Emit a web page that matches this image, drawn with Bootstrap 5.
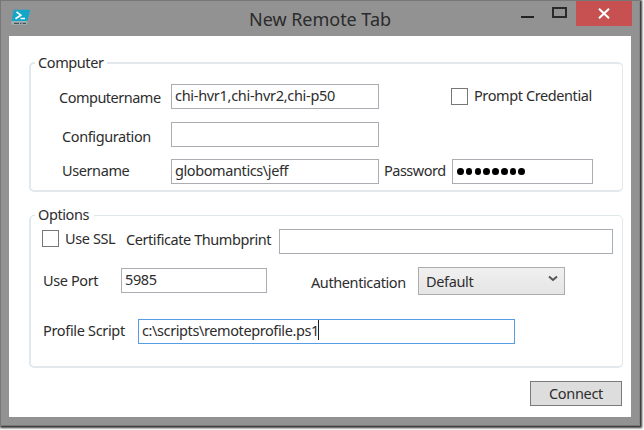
<!DOCTYPE html>
<html lang="en">
<head>
<meta charset="utf-8">
<meta name="viewport" content="width=device-width, initial-scale=1">
<title>New Remote Tab</title>
<link href="https://cdn.jsdelivr.net/npm/bootstrap@5.3.0/dist/css/bootstrap.min.css" rel="stylesheet">
<style>
body{width:644px;height:430px;overflow:hidden;background:#fff;font-family:"Noto Sans","Open Sans",sans-serif;font-size:14.5px;line-height:20px;letter-spacing:-.4px;color:#2d2d2d}
.win{width:640px;height:426px;background:#929292;border:1px solid #777;border-right-color:#858585;box-shadow:1px 1px 2px 1px #333}
.titlebar{height:35px;padding-left:10px}
.app-icon{width:20px;height:17px;margin-top:8px}
.caption{width:144px;margin:5px 0 0 218px;font-size:18px;line-height:26px;letter-spacing:-.03px;color:#2b2b2b}
.min-btn{width:13px;height:2px;background:#222;margin:15px 0 0 128px}
.max-btn{width:15px;height:11px;border:2px solid #2a2a2a;margin:6px 0 0 18px}
.close-btn{width:56px;height:25px;background:#c75050;margin-left:9px}
.client{width:622px;height:381px;margin-left:8px;background:#fff;padding:26px 9px 0 20px}
.group{border:2px solid #e1e8ee;border-right-width:1px;border-radius:5px;width:594px;height:130px}
.group-options{height:153px;margin-top:23px;border-top:1px solid #dce8ea}
.legend-text{height:20px;width:72px;margin:-12px 0 0 4px;padding:0 4px 0 3px;background:#fff}
.group-options .legend-text{width:59px}
.line{height:25px}
.line-1{margin-top:12px;padding-left:28px}
.line-2{margin-top:13px;padding-left:31px}
.line-3{margin-top:12px;padding-left:31px}
.line-4{margin-top:5px;padding-left:11px}
.line-5{margin-top:14px;padding-left:12px}
.line-6{margin-top:26px;padding-left:12px}
.fld{height:25px;border:1px solid #abadb3;padding:0 3px;line-height:21px;background:#fff;flex:none}
.fld-active{border-color:#569de5}
.chk{width:17px;height:17px;border:1px solid #777;background:#fff;flex:none}
.lb{flex:none;white-space:nowrap}
.up-1{margin-bottom:2px}
.up-2{margin-bottom:4px}
.up-3{margin-bottom:6px}
.down-1{margin-top:2px}
.w-208{width:208px}
.lb-name{width:112px;letter-spacing:-.5px}
.lb-user{width:109px}
.lb-pass{width:73px;padding-left:5px;letter-spacing:-.5px}
.w-pass{width:141px}
.lb-prompt{margin-left:6px}
.chk-prompt{margin-left:72px}
.lb-ssl{width:67px;padding-left:6px}
.lb-cert{width:153px;letter-spacing:-.43px}
.w-cert{width:334px}
.lb-port{width:78px}
.w-port{width:146px}
.lb-auth{width:151px;padding-left:44px}
.lb-script{width:95px;letter-spacing:-.33px}
.w-script{width:377px}
.w-hosts{letter-spacing:-.3px}
.drop{width:147px;height:28px;border:1px solid #acacac;background:linear-gradient(#f0f0f0,#e5e5e5);padding:0 6px 0 7px;flex:none;letter-spacing:-.35px}
.connect{width:92px;height:25px;border:1px solid #7a7a7a;border-radius:0;background:#ddd;padding:0;margin-top:13px;font-size:inherit;line-height:23px;letter-spacing:-.33px;color:#2d2d2d}
.dots{gap:2.2px;padding-left:4px}
.dot{width:6.6px;height:7px;border-radius:50%;background:#000}
.caret{width:1px;height:20px;margin-left:-1px;background:#222}
</style>
</head>
<body>
<main class="win">
<header class="titlebar d-flex align-items-start">
<svg class="app-icon flex-shrink-0" viewBox="0 0 20 17"><path d="M3.200.8h15q1 0 .8 1L16.500 12H.8L2.500 1.500q.1-.7.7-.7z" fill="#14a6c9"/><path d="M.8 12h15.700l-.5 3.200q-.1.600-.8.600H.9q-.700 0-.6-.7z" fill="#a2b0b5"/><path d="M3 14.300h12" stroke="#46545a" stroke-width="1.200" stroke-dasharray="5 1 1.500 1"/><path d="M5.500 2.800l4.300 3.400-5.300 3.600M9.500 9.500h4.500" fill="none" stroke="#fff" stroke-width="1.700"/></svg>
<div class="caption lb">New Remote Tab</div>
<div class="min-btn"></div><div class="max-btn"></div>
<div class="close-btn d-flex justify-content-center align-items-center"><svg width="12" height="11" viewBox="0 0 12 11"><path d="M1 .7l10 9.600M11 .7L1 10.300" stroke="#fff" stroke-width="2"/></svg></div>
</header>
<section class="client">
<div class="group">
<div class="legend-text lb">Computer</div>
<div class="line line-1 d-flex align-items-center"><div class="lb lb-name">Computername</div><div class="fld w-208 w-hosts">chi-hvr1,chi-hvr2,chi-p50</div><div class="chk chk-prompt"></div><div class="lb lb-prompt up-2">Prompt Credential</div></div>
<div class="line line-2 d-flex align-items-center"><div class="lb lb-user down-1">Configuration</div><div class="fld w-208"></div></div>
<div class="line line-3 d-flex align-items-center"><div class="lb lb-user up-2">Username</div><div class="fld w-208">globomantics\jeff</div><div class="lb lb-pass up-2">Password</div><div class="fld w-pass dots d-flex align-items-center"><i class="dot"></i><i class="dot"></i><i class="dot"></i><i class="dot"></i><i class="dot"></i><i class="dot"></i><i class="dot"></i><i class="dot"></i></div></div>
</div>
<div class="group group-options">
<div class="legend-text lb">Options</div>
<div class="line line-4 d-flex align-items-center"><div class="chk up-3"></div><div class="lb lb-ssl mb-2">Use SSL</div><div class="lb lb-cert up-3">Certificate Thumbprint</div><div class="fld w-cert"></div></div>
<div class="line line-5 d-flex align-items-center"><div class="lb lb-port up-1">Use Port</div><div class="fld w-port">5985</div><div class="lb lb-auth down-1">Authentication</div><div class="drop d-flex align-items-center justify-content-between">Default<svg class="up-2" width="10" height="7" viewBox="0 0 10 7"><path d="M1 1.500l4 3.500 4-3.500" fill="none" stroke="#555" stroke-width="2"/></svg></div></div>
<div class="line line-6 d-flex align-items-center"><div class="lb lb-script up-2">Profile Script</div><div class="fld fld-active w-script d-flex">c:\scripts\remoteprofile.ps1<i class="caret"></i></div></div>
</div>
<div class="d-flex justify-content-end"><button class="connect btn">Connect</button></div>
</section>
</main>
<script src="https://cdn.jsdelivr.net/npm/bootstrap@5.3.0/dist/js/bootstrap.bundle.min.js"></script>
</body>
</html>
